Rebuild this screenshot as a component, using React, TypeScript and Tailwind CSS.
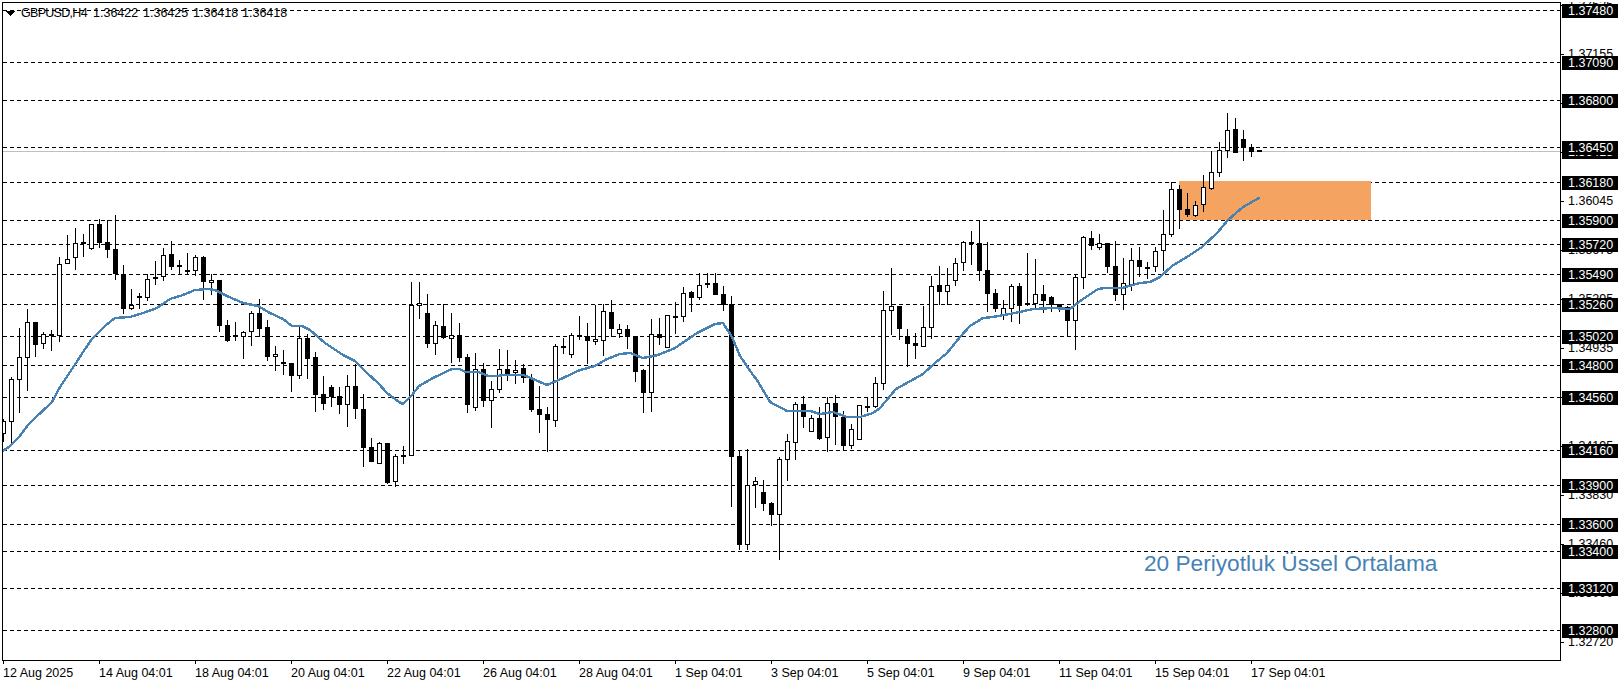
const C: [number, number, number, number, number][] = [
[419,421,434,442,1],[377,379,422,443,1],[328,357,380,413,1],[309,322,358,391,1],[322,322,345,357,0],
[332,334,344,349,1],[330,334,336,351,1],[257,264,336,342,1],[235,259,264,264,1],[228,243,258,270,1],
[234,242,244,257,0],[224,224,249,250,1],[219,224,243,248,0],[220,242,250,258,0],[215,249,274,280,0],
[265,274,309,314,0],[289,305,309,310,1],[293,296,298,309,0],[274,279,298,301,1],[261,277,279,285,0],
[248,255,277,281,1],[241,254,267,270,0],[260,265,267,274,0],[253,270,272,274,0],[255,257,271,276,1],
[256,257,282,300,0],[274,280,283,295,1],[280,280,326,332,0],[320,325,341,342,0],[322,335,337,341,0],
[331,332,337,359,1],[311,313,332,346,1],[299,313,329,337,0],[320,327,357,361,0],[346,354,357,371,1],
[350,362,364,375,0],[363,363,376,392,0],[327,338,376,379,1],[334,338,359,379,0],[352,357,395,412,0],
[376,394,404,410,0],[385,387,397,407,0],[387,396,405,414,0],[375,386,405,427,1],[364,386,409,419,0],
[394,409,448,467,0],[438,447,462,462,0],[442,443,464,464,1],[443,443,483,484,0],[454,456,482,487,1],
[446,455,457,464,0],[282,305,456,456,1],[282,303,306,319,1],[294,313,344,348,0],[321,325,344,355,1],
[304,326,338,339,0],[313,335,339,363,1],[323,335,358,362,0],[354,357,405,413,0],[353,369,408,411,1],
[363,369,401,407,0],[381,389,401,428,1],[349,369,390,393,1],[350,369,376,381,0],[360,370,373,384,1],
[364,368,378,383,0],[374,378,410,412,0],[386,409,415,433,0],[407,414,420,452,0],[344,346,421,427,1],
[338,346,347,354,0],[333,335,355,358,1],[316,335,337,340,0],[323,336,341,364,0],[305,339,342,345,1],
[304,311,341,356,1],[300,312,329,337,0],[324,329,334,338,1],[325,329,337,349,0],[336,336,372,382,0],
[369,370,393,413,0],[319,334,393,412,1],[318,334,338,345,0],[315,315,348,348,1],[302,316,317,334,0],
[287,293,317,322,1],[291,292,298,312,0],[273,285,298,300,1],[273,283,285,288,0],[273,283,295,295,0],
[286,294,305,311,0],[296,304,457,507,0],[450,456,545,550,0],[449,485,545,550,1],[477,481,485,508,1],
[480,492,504,511,0],[502,503,515,526,0],[457,459,515,560,1],[434,441,460,481,1],[402,404,443,460,1],
[396,404,417,428,0],[415,418,432,432,1],[407,418,439,440,0],[397,403,438,452,1],[395,403,417,445,0],
[411,417,446,451,0],[424,429,446,449,1],[405,405,440,440,1],[397,406,408,412,0],[377,383,407,408,1],
[291,310,384,390,1],[268,306,311,335,1],[306,306,329,340,0],[329,336,344,367,0],[333,343,346,359,0],
[306,327,347,347,1],[276,286,328,339,1],[266,285,292,305,0],[268,285,292,305,1],[258,263,281,286,1],
[241,242,263,271,1],[231,242,244,265,0],[221,243,271,281,0],[242,270,294,312,0],[289,293,309,312,0],
[300,308,315,320,1],[284,286,309,322,1],[283,286,306,324,0],[253,303,305,306,0],[259,294,304,309,1],
[285,294,301,313,0],[296,297,305,312,0],[304,304,307,312,0],[306,307,321,336,0],[275,277,321,350,1],
[236,237,278,289,1],[231,238,246,250,0],[234,243,248,250,1],[243,243,267,273,0],[241,266,295,301,0],
[258,283,295,310,1],[248,260,285,291,1],[247,260,267,277,0],[262,267,269,279,0],[247,251,267,272,1],
[210,234,251,271,1],[182,189,235,237,1],[185,189,210,229,0],[193,209,215,217,0],[201,205,216,217,1],
[175,187,205,212,1],[151,172,189,190,1],[142,150,173,177,1],[113,130,151,158,1],[118,129,153,153,0],
[130,139,148,161,0],[144,147,152,157,0],[150,150,152,152,0],
];

const MA = "3,451 10,446 19,437 28,425 32,421 52,402 60,387 68,375 76,363 83,352 92,339 106,325 115,318 130,317 143,313 157,308 170,299 183,295 195,290 208,289 215,290 227,296 243,303 258,306 270,313 283,319 292,326 302,326 310,330 325,343 343,355 355,361 367,373 378,383 387,393 399,402 403,404 412,395 419,386 433,378 452,369 460,369 465,372 478,372 488,376 498,376 503,375 523,375 533,379 547,385 563,378 580,370 595,366 607,359 620,354 630,353 643,358 658,355 675,348 697,333 715,324 723,323 732,337 740,356 753,375 757,380 770,402 787,411 810,411 820,414 833,412 847,417 860,417 873,413 880,408 896,389 923,374 935,363 947,353 960,337 970,326 983,318 993,317 1020,312 1033,309 1053,308 1070,309 1083,299 1098,289 1105,288 1122,288 1140,283 1150,282 1160,277 1172,266 1187,257 1202,247 1217,233 1228,220 1243,207 1259,198";

const LINES = [10, 62, 100, 147, 182, 220, 244, 274, 304, 336, 365, 397, 450, 485, 524, 551, 588, 630];

const TICKS: [string, number][] = [
  ["1.37525", 4], ["1.37155", 53], ["1.36785", 102], ["1.36415", 151], ["1.36045", 200], ["1.35675", 249],
  ["1.35295", 298], ["1.34935", 347], ["1.34565", 396], ["1.34195", 445], ["1.33830", 494], ["1.33460", 543],
  ["1.33090", 592], ["1.32720", 641],
];

const LABELS: [string, number][] = [
  ["1.37480", 10], ["1.37090", 62], ["1.36800", 100], ["1.36418", 151], ["1.36450", 147], ["1.36180", 182],
  ["1.35900", 220], ["1.35720", 244], ["1.35490", 274], ["1.35260", 304], ["1.35020", 336], ["1.34800", 365],
  ["1.34560", 397], ["1.34160", 450], ["1.33900", 485], ["1.33600", 524], ["1.33400", 551], ["1.33120", 588],
  ["1.32800", 630],
];

const TIMES = ["12 Aug 2025", "14 Aug 04:01", "18 Aug 04:01", "20 Aug 04:01", "22 Aug 04:01", "26 Aug 04:01", "28 Aug 04:01", "1 Sep 04:01", "3 Sep 04:01", "5 Sep 04:01", "9 Sep 04:01", "11 Sep 04:01", "15 Sep 04:01", "17 Sep 04:01"];

const font = "font-['Liberation_Sans',Arial,sans-serif]";

function Chart() {
  return (
    <svg width={1557} height={657} viewBox="3 3 1557 657" className="block" shapeRendering="crispEdges">
      {LINES.map((y) => (
        <line key={y} x1={3} x2={1560} y1={y + 0.5} y2={y + 0.5} stroke="#000" strokeDasharray="4 3" />
      ))}
      <rect x={3} y={151} width={1557} height={1} fill="#c0c0c0" />
      <rect x={1179} y={181} width={192} height={39} fill="#f4a460" />
      {C.map(([hi, top, bot, lo, bull], k) => {
        const x = 3 + 8 * k;
        return (
          <g key={k}>
            {lo > hi && <rect x={x} y={hi} width={1} height={lo - hi} fill="#000" />}
            <rect x={x - 2} y={top} width={5} height={Math.max(bot - top, 2)} fill="#000" />
            {bull === 1 && bot - top > 2 && <rect x={x - 1} y={top + 1} width={3} height={bot - top - 2} fill="#fff" />}
          </g>
        );
      })}
      <polyline points={MA} fill="none" stroke="#4682b4" strokeWidth={2.4} strokeLinejoin="round" strokeLinecap="round" />
    </svg>
  );
}

export default function App() {
  return (
    <div className={`w-[1624px] h-[684px] bg-white overflow-hidden text-black ${font} text-[12.5px] leading-[14px]`}>
      <div className="flex pl-[2px] pt-[2px]">
        <div className="relative w-[1559px] h-[659px] border border-black">
          <Chart />
          <div className="absolute left-[3px] top-[3px] flex items-center">
            <svg width={9} height={5} viewBox="0 0 9 5" className="mr-[6px]" shapeRendering="crispEdges"><polygon points="0,0 9,0 4.5,5" fill="#000" /></svg>
            <span className="w-[72px] whitespace-nowrap tracking-[-0.7px]">GBPUSD,H4</span>
            <span className="w-[50px]">1.36422</span>
            <span className="w-[50px]">1.36425</span>
            <span className="w-[49px]">1.36418</span>
            <span>1.36418</span>
          </div>
          <div className="absolute left-[1141px] top-[547px] text-[22.67px] leading-[26px] text-[#4682b4] whitespace-nowrap">20 Periyotluk Üssel Ortalama</div>
        </div>
        <div className="relative flex-1 h-[659px] overflow-hidden">
          {TICKS.map(([t, y]) => (
            <div key={t} className="absolute left-0 flex items-center h-[14px]" style={{ top: y - 8 }}>
              <span className="w-[3px] h-px bg-black" />
              <span className="ml-[4px]">{t}</span>
            </div>
          ))}
          {LABELS.map(([t, y]) => (
            <div key={t} className="absolute left-[1px] w-[56px] h-[14px] bg-black text-white pl-[6px]" style={{ top: y - 8 }}>
              {t}
            </div>
          ))}
        </div>
      </div>
      <div className="flex pl-[3px]">
        {TIMES.map((t) => (
          <div key={t} className="w-[96px] shrink-0 whitespace-nowrap">
            <div className="w-px h-[3px] bg-black" />
            <div className="mt-[2px]">{t}</div>
          </div>
        ))}
      </div>
    </div>
  );
}
